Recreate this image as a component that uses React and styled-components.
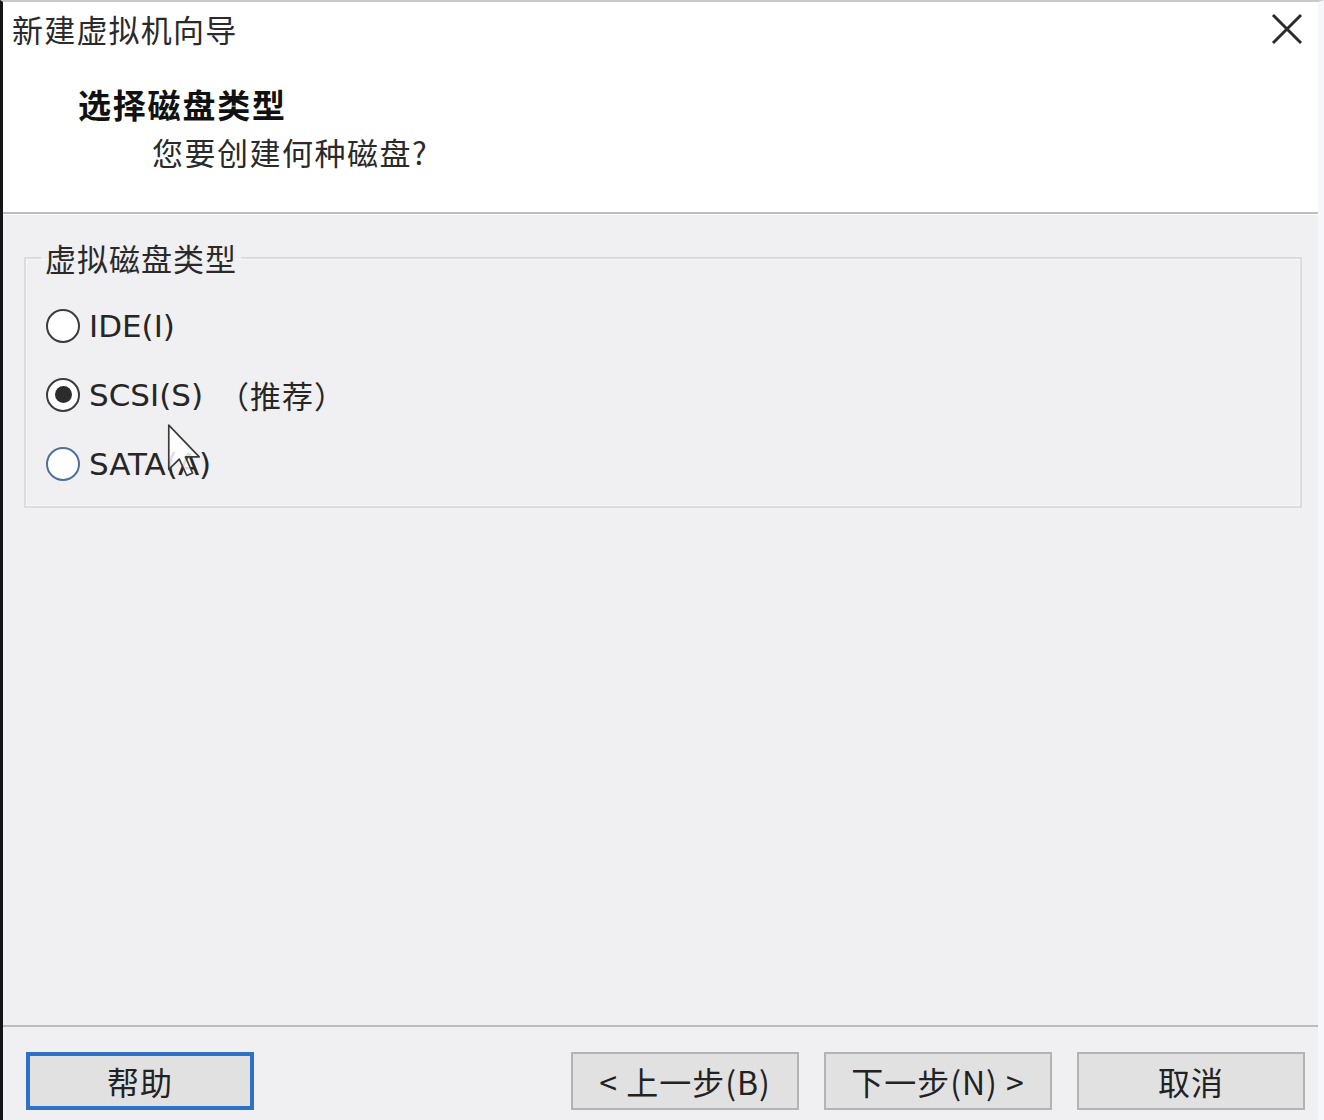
import styled, { createGlobalStyle } from 'styled-components';

const GlobalStyle = createGlobalStyle`
    html, body {
        margin: 0;
        padding: 0;
        background: #f0eff1;
    }
    body {
        font-family: "Noto Sans CJK SC", "Noto Sans", sans-serif;
        color: #1f1f1f;
    }
`;

const Window = styled.div`
    position: relative;
    box-sizing: border-box;
    width: 1324px;
    height: 1120px;
    display: flex;
    flex-direction: column;
    background: #f0eff1;
    border-top: 2px solid #c9c9cb;
    border-left: 3px solid #151515;
    border-right: 6px solid #f5f7fb;
    overflow: hidden;
`;

const Header = styled.div`
    height: 210px;
    flex-shrink: 0;
    background: #ffffff;
    display: flex;
    flex-direction: column;
    border-bottom: 2px solid #bdbdbf;
    box-shadow: 0 1px 0 #ffffff;
`;

const TitleRow = styled.div`
    height: 54px;
    display: flex;
    align-items: center;
    justify-content: space-between;
    padding: 0 15px 0 9px;
`;

const WindowTitle = styled.div`
    font-size: 31px;
    line-height: 54px;
    color: #2a2a2a;
    letter-spacing: 1.2px;
`;

const CloseButton = styled.div`
    width: 32px;
    height: 32px;
    display: flex;
    align-items: center;
    justify-content: center;
`;

const Heading = styled.div`
    margin-top: 28px;
    padding-left: 75px;
    font-size: 33px;
    line-height: 40px;
    font-weight: 700;
    letter-spacing: 1.8px;
    color: #111;
`;

const Subtitle = styled.div`
    margin-top: 8px;
    padding-left: 149px;
    font-size: 31px;
    line-height: 40px;
    letter-spacing: 1.5px;
    color: #2a2a2a;
`;

const Body = styled.div`
    flex: 1;
    padding: 26px 16px 0 21px;
`;

const GroupBox = styled.fieldset`
    margin: 0;
    padding: 0 0 8px 20px;
    border: 2px solid #dcdbdd;
    box-shadow: inset 0 0 0 1px #f7f7f8;
    border-radius: 0;
    height: 268px;
    box-sizing: border-box;
`;

const Legend = styled.legend`
    margin-left: -5px;
    padding: 0 4px;
    font-size: 31px;
    line-height: 36px;
    letter-spacing: 1px;
    color: #2a2a2a;
`;

const RadioList = styled.div`
    margin-top: 15px;
    display: flex;
    flex-direction: column;
`;

const RadioRow = styled.label`
    height: 69px;
    display: flex;
    align-items: center;
    gap: 9px;
    font-family: "DejaVu Sans", "Noto Sans CJK SC", sans-serif;
    font-size: 31px;
    color: #262626;
`;

const RadioCircle = styled.span`
    box-sizing: border-box;
    width: 34px;
    height: 34px;
    border-radius: 50%;
    background: #ffffff;
    border: 2.5px solid ${(p) => (p.hover ? '#4f7199' : '#3b3b3b')};
    display: flex;
    align-items: center;
    justify-content: center;

    &::after {
        content: '';
        width: 17px;
        height: 17px;
        border-radius: 50%;
        background: #2c2c2c;
        display: ${(p) => (p.checked ? 'block' : 'none')};
    }
`;

const Note = styled.span`
    margin-left: 6px;
    font-family: "Noto Sans CJK SC", sans-serif;
    letter-spacing: 1px;
`;

const Footer = styled.div`
    flex-shrink: 0;
    border-top: 2px solid #bcbcbe;
    padding: 25px 13px 10px 23px;
    display: flex;
    align-items: center;
`;

const NavGroup = styled.div`
    margin-left: auto;
    display: flex;
    gap: 25px;
`;

const Button = styled.button`
    box-sizing: border-box;
    width: 228px;
    height: 58px;
    padding: 0;
    background: #e1e1e2;
    border: ${(p) => (p.focused ? '4px solid #2f71c6' : '2px solid #b3b3b5')};
    font-family: "Noto Sans CJK SC", "Noto Sans", sans-serif;
    font-size: 32px;
    letter-spacing: 1px;
    color: #222;
    display: flex;
    align-items: center;
    justify-content: center;
`;

const Cursor = styled.svg`
    position: absolute;
    left: 163px;
    top: 420px;
`;

function App() {
    return (
        <Window>
            <GlobalStyle />
            <Header>
                <TitleRow>
                    <WindowTitle>新建虚拟机向导</WindowTitle>
                    <CloseButton>
                        <svg width="32" height="32" viewBox="0 0 32 32">
                            <path d="M2 2 L30 30 M30 2 L2 30" stroke="#2b2b2b" strokeWidth="3" fill="none" />
                        </svg>
                    </CloseButton>
                </TitleRow>
                <Heading>选择磁盘类型</Heading>
                <Subtitle>您要创建何种磁盘?</Subtitle>
            </Header>
            <Body>
                <GroupBox>
                    <Legend>虚拟磁盘类型</Legend>
                    <RadioList>
                        <RadioRow>
                            <RadioCircle />
                            IDE(I)
                        </RadioRow>
                        <RadioRow>
                            <RadioCircle checked />
                            SCSI(S)<Note>（推荐）</Note>
                        </RadioRow>
                        <RadioRow>
                            <RadioCircle hover />
                            SATA(A)
                        </RadioRow>
                    </RadioList>
                </GroupBox>
            </Body>
            <Footer>
                <Button focused>帮助</Button>
                <NavGroup>
                    <Button>&lt; 上一步(B)</Button>
                    <Button>下一步(N) &gt;</Button>
                    <Button>取消</Button>
                </NavGroup>
            </Footer>
            <Cursor width="36" height="56" viewBox="0 0 13 20">
                <path d="M1 1 L1 17 L4.8 13.3 L7.5 19.2 L9.6 18.3 L7 12.5 L12 12.5 Z" fill="#ffffff" fillOpacity="0.85" stroke="#3a3a3a" strokeWidth="0.6" strokeLinejoin="round" />
            </Cursor>
        </Window>
    );
}

export default App;
